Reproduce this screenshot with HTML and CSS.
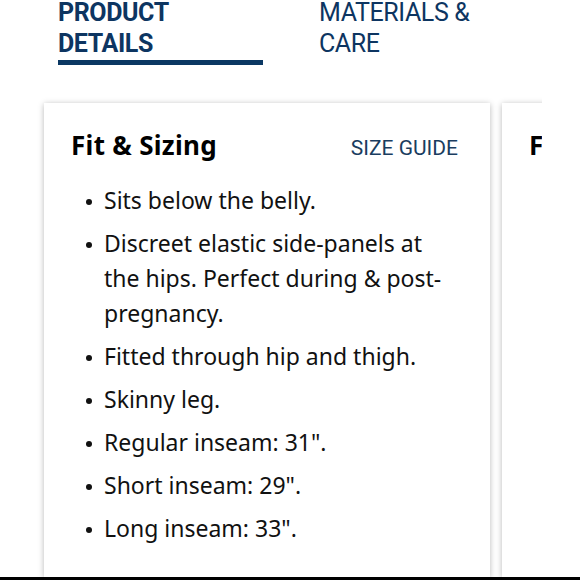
FILE: index.html
```html
<!DOCTYPE html>
<html lang="en">
<head>
<meta charset="utf-8">
<title>Product Details</title>
<link rel="stylesheet" href="styles.css">
</head>
<body>
  <nav class="tabs">
    <div class="tab tab-active">
      <div class="tab-label">PRODUCT<br>DETAILS</div>
      <div class="tab-underline"></div>
    </div>
    <div class="tab">
      <div class="tab-label">MATERIALS &amp;<br>CARE</div>
    </div>
  </nav>
  <div class="carousel">
    <section class="card">
      <header class="card-head">
        <h2 class="card-title">Fit &amp; Sizing</h2>
        <a class="card-link" href="#">SIZE GUIDE</a>
      </header>
      <ul class="points">
        <li class="point">Sits below the belly.</li>
        <li class="point">Discreet elastic side-panels at the hips. Perfect during &amp; post-pregnancy.</li>
        <li class="point">Fitted through hip and thigh.</li>
        <li class="point">Skinny leg.</li>
        <li class="point">Regular inseam: 31".</li>
        <li class="point">Short inseam: 29".</li>
        <li class="point">Long inseam: 33".</li>
      </ul>
    </section>
    <section class="card">
      <header class="card-head">
        <h2 class="card-title">Fabric &amp; Care</h2>
      </header>
    </section>
  </div>
  <div class="bottom-bar"></div>
</body>
</html>
```
FILE: styles.css
```css
html, body {
  margin: 0;
  padding: 0;
  background: #ffffff;
}

body {
  height: 580px;
  display: flex;
  flex-direction: column;
  overflow: hidden;
  font-family: "Noto Sans", "Liberation Sans", sans-serif;
  color: #111111;
}

.tabs {
  display: flex;
  padding-left: 58px;
  margin-top: -3px;
  flex: 0 0 auto;
}

.tab {
  font-family: Roboto, "Liberation Sans", sans-serif;
  font-size: 25px;
  line-height: 31px;
  color: #0d3561;
  letter-spacing: -0.4px;
}

.tab-active {
  width: 205px;
  font-weight: 700;
}

.tab + .tab {
  margin-left: 56px;
  font-weight: 400;
}

.tab-underline {
  height: 5px;
  margin-top: 1px;
  background: #0b3863;
}

.carousel {
  flex: 1 1 auto;
  min-height: 0;
  width: 542px;
  box-sizing: border-box;
  display: flex;
  gap: 12px;
  padding: 38px 0 0 44px;
  overflow: hidden;
}

.card {
  flex: 0 0 446px;
  box-sizing: border-box;
  background: #ffffff;
  box-shadow: 0 1px 6px rgba(0, 0, 0, 0.28);
  padding: 27px 32px 0 27px;
}

.card-head {
  display: flex;
  justify-content: space-between;
  align-items: baseline;
}

.card-title {
  margin: 0;
  font-size: 26px;
  line-height: 30px;
  font-weight: 700;
  color: #000000;
  letter-spacing: 0.3px;
}

.card-link {
  font-family: Roboto, "Liberation Sans", sans-serif;
  font-size: 21px;
  color: #1a3d60;
  text-decoration: none;
}

.points {
  list-style: none;
  margin: 23px 0 0 0;
  padding: 0 0 0 15px;
}

.point {
  display: flex;
  align-items: flex-start;
  font-size: 23px;
  line-height: 35px;
  margin-bottom: 8px;
  color: #111111;
}

.point::before {
  content: "";
  flex: 0 0 6px;
  width: 6px;
  height: 6px;
  border-radius: 50%;
  background: #111111;
  margin: 16px 12px 0 0;
}

.bottom-bar {
  flex: 0 0 3px;
  background: #000000;
}
```
